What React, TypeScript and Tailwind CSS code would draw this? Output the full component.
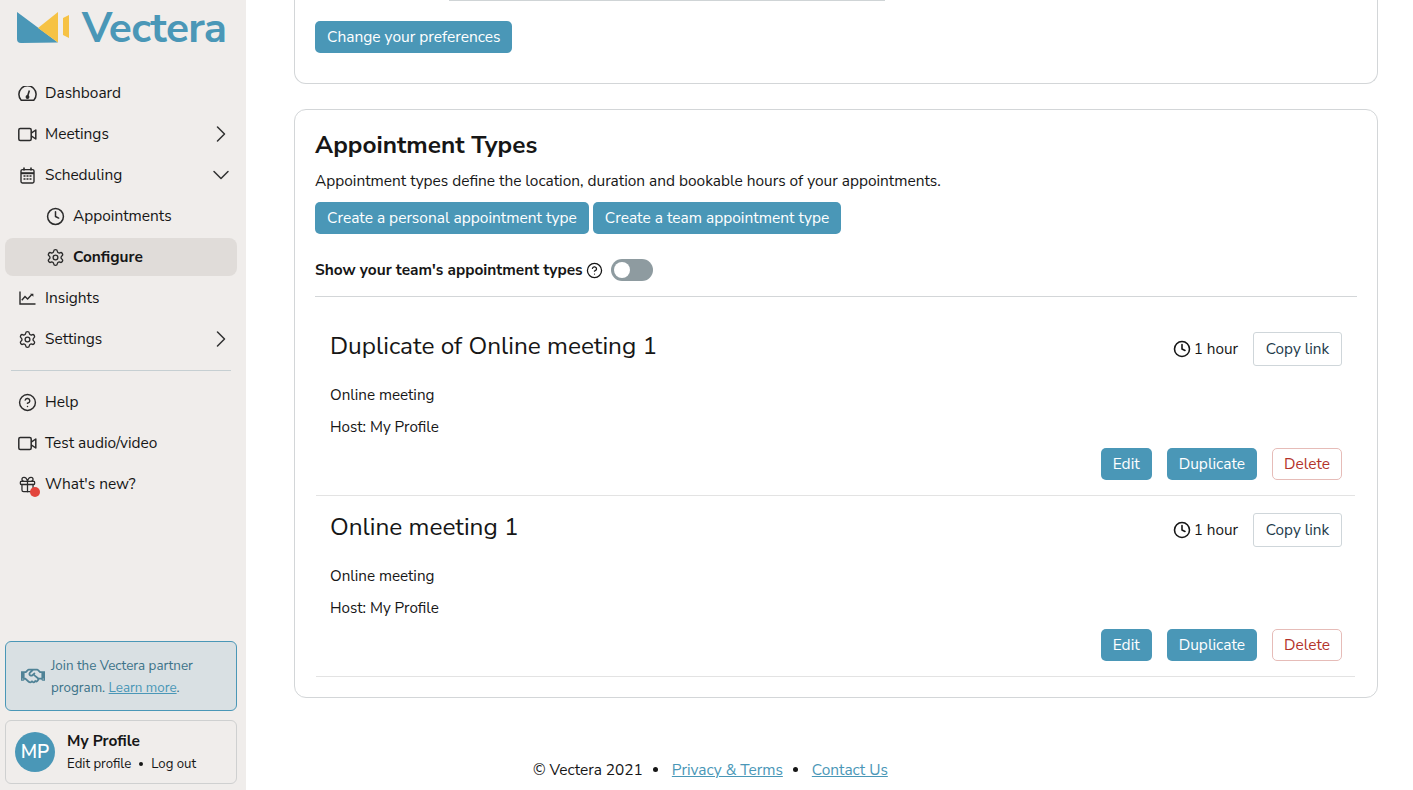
import React from "react";
import { ChevronDown, ChevronRight, CircleHelp, Clock, Gift, Settings } from "lucide-react";
import { FaRegHandshake } from "react-icons/fa";

const VideoIcon = () => (
  <svg width="19" height="15" viewBox="0 0 19 15" fill="none" stroke="#2b2b2b" strokeWidth="1.5">
    <rect x="0.8" y="1.6" width="12.4" height="11.8" rx="1.5" />
    <path d="M13.2 6.2 17.8 3v9l-4.6-3.2" strokeLinejoin="round" />
  </svg>
);

const GaugeIcon = () => (
  <svg width="19" height="15" viewBox="0 0 19 15" fill="none" stroke="#2b2b2b" strokeWidth="1.5">
    <path d="M3.2 14.2h12.6a8.6 8.6 0 1 0-12.6 0Z" strokeLinejoin="round" />
    <path d="M9.5 10.5 11.4 4.5" strokeWidth="1.6" />
    <circle cx="9.5" cy="11" r="1.2" fill="#2b2b2b" />
  </svg>
);

const CalendarIcon = () => (
  <svg width="15" height="17" viewBox="0 0 15 17" fill="none" stroke="#2b2b2b">
    <rect x="1" y="2.6" width="13" height="13.4" rx="1.4" strokeWidth="1.4" />
    <path d="M1 6.2h13" strokeWidth="2" />
    <path d="M4 0.6v3M11 0.6v3" strokeWidth="1.6" />
    <path d="M3.5 9h2M6.5 9h2M9.5 9h2M3.5 12h2M6.5 12h2M9.5 12h2" strokeWidth="1.6" />
  </svg>
);

const ChartIcon = () => (
  <svg width="17" height="14" viewBox="0 0 17 14" fill="none" stroke="#2b2b2b" strokeWidth="1.4">
    <path d="M1 0.5V13h15.5" />
    <path d="M2.8 9.2 6 5.6l2.6 2.4 4.2-4.4" />
    <path d="M11 2.8h3.4v3z" fill="#2b2b2b" stroke="none" />
  </svg>
);

const NavRow = ({
  icon,
  label,
  chevron,
  sub,
  active,
}: {
  icon: React.ReactNode;
  label: string;
  chevron?: "right" | "down";
  sub?: boolean;
  active?: boolean;
}) => (
  <div
    className={`flex h-[38px] items-center rounded-lg pr-[2px] text-[15.45px] text-[#161616] ${sub ? "pl-[40px]" : "pl-[12px]"} ${active ? "bg-[#e0dcd9] font-bold" : ""}`}
  >
    <span className="flex w-[20px] justify-center">{icon}</span>
    <span className="ml-[8px] flex-1">{label}</span>
    {chevron === "right" && <ChevronRight size={28} strokeWidth={1.3} color="#333" />}
    {chevron === "down" && <ChevronDown size={28} strokeWidth={1.3} color="#333" />}
  </div>
);

const Sidebar = () => (
  <aside className="flex h-[790px] w-[246px] shrink-0 flex-col bg-[#f0edeb] pr-[9px] pl-[5px]">
    <div className="flex h-[74px] items-start pt-[12px] pl-[12px]">
      <svg width="53" height="32" viewBox="0 0 53 32" className="shrink-0">
        <path d="M0 0 41 30.5 4 31q-4 0-4-4Z" fill="#4a97b7" />
        <path d="M41 0v30.5L21 16Z" fill="#f6c244" />
        <path d="M46 6l6-3v23l-6-3Z" fill="#f6c244" />
      </svg>
      <span className="mt-[-6px] ml-[12px] text-[42.4px] leading-[44px] font-bold tracking-[-0.7px] text-[#4a97b7]">
        Vectera
      </span>
    </div>
    <nav className="flex flex-col gap-[3px]">
      <NavRow icon={<GaugeIcon />} label="Dashboard" />
      <NavRow icon={<VideoIcon />} label="Meetings" chevron="right" />
      <NavRow icon={<CalendarIcon />} label="Scheduling" chevron="down" />
      <NavRow sub icon={<Clock size={19} strokeWidth={1.9} color="#2b2b2b" />} label="Appointments" />
      <NavRow sub active icon={<Settings size={19} strokeWidth={1.7} color="#2b2b2b" />} label="Configure" />
      <NavRow icon={<ChartIcon />} label="Insights" />
      <NavRow icon={<Settings size={19} strokeWidth={1.7} color="#2b2b2b" />} label="Settings" chevron="right" />
    </nav>
    <div className="mx-[6px] mt-[12px] mb-[12px] h-px bg-[#c6cfd2]" />
    <div className="flex flex-col gap-[3px]">
      <NavRow icon={<CircleHelp size={19} strokeWidth={1.8} color="#2b2b2b" />} label="Help" />
      <NavRow icon={<VideoIcon />} label="Test audio/video" />
      <NavRow
        icon={
          <span className="relative flex">
            <Gift size={19} strokeWidth={1.6} color="#2b2b2b" />
            <span className="absolute top-[12px] left-[12px] h-[10px] w-[10px] rounded-full bg-[#e2453c]" />
          </span>
        }
        label="What's new?"
      />
    </div>
    <div className="mt-auto mb-[6px] flex flex-col gap-[9px]">
      <div className="flex h-[70px] items-center rounded-md border border-[#4a97b7] bg-[#d9e0e3] pl-[15px] text-[13.4px] leading-[22px] text-[#3c7389]">
        <FaRegHandshake size={24} className="shrink-0 text-[#4f8296]" />
        <p className="mt-[2px] ml-[6px]">
          Join the Vectera partner
          <br />
          program. <span className="text-[#4a97b7] underline">Learn more</span>.
        </p>
      </div>
      <div className="flex h-[64px] items-center rounded-md border border-[#cfd0d0] pl-[9px] text-[#161616]">
        <span className="flex h-[40px] w-[40px] items-center justify-center rounded-full bg-[#4a97b7] text-[19px] font-semibold text-white">
          MP
        </span>
        <div className="ml-[12px]">
          <div className="text-[15.45px] leading-[20px] font-bold">My Profile</div>
          <div className="mt-[3px] flex items-center text-[13.2px] leading-[20px]">
            Edit profile<span className="mx-[8px] h-[4px] w-[4px] rounded-full bg-[#161616]" />Log out
          </div>
        </div>
      </div>
    </div>
  </aside>
);

const PrimaryButton = ({ children }: { children: React.ReactNode }) => (
  <button className="h-[32px] rounded-[5px] bg-[#4a97b7] px-[12px] text-[15.5px] text-white">{children}</button>
);

const AppointmentRow = ({ title, tall }: { title: string; tall?: boolean }) => (
  <div className={`mr-[2px] ml-px border-b border-[#e3e3e3] pr-[13px] pb-[15px] pl-[14px] ${tall ? "pt-[35px]" : "pt-[17px]"}`}>
    <div className="flex items-start justify-between">
      <h3 className="text-[24.4px] leading-[28px] text-[#161616]">{title}</h3>
      <div className="flex items-center">
        <Clock size={18} strokeWidth={2.1} color="#161616" />
        <span className="ml-[3px] text-[15.3px] text-[#161616]">1 hour</span>
        <button className="ml-[15px] h-[34px] w-[89px] rounded-[3px] border border-[#cfd6da] text-[15.3px] text-[#1c3a4a]">
          Copy link
        </button>
      </div>
    </div>
    <p className="mt-[18px] text-[15.2px] leading-[22px] text-[#161616]">Online meeting</p>
    <p className="mt-[10px] text-[15.2px] leading-[22px] text-[#161616]">Host: My Profile</p>
    <div className="mt-[10px] flex justify-end gap-[15px]">
      <PrimaryButton>Edit</PrimaryButton>
      <PrimaryButton>Duplicate</PrimaryButton>
      <button className="h-[32px] w-[70px] rounded-[5px] border border-[#e6bcb8] text-[15.45px] text-[#b3322a]">
        Delete
      </button>
    </div>
  </div>
);

export default function App() {
  return (
    <div className="flex h-[790px] w-[1413px] overflow-hidden bg-white font-['Nunito_Sans','Lato','Noto_Sans',sans-serif]">
      <Sidebar />
      <main className="flex flex-1 flex-col overflow-hidden pr-[35px] pl-[48px]">
        <section className="mt-[-20px] h-[104px] shrink-0 rounded-b-xl border-x border-b border-[#d3d6d8] px-[20px] pt-[20px]">
          <div className="ml-[134px] h-px w-[436px] bg-[#cfd4d6]" />
          <div className="mt-[20px]">
            <PrimaryButton>Change your preferences</PrimaryButton>
          </div>
        </section>
        <section className="mt-[25px] h-[589px] shrink-0 rounded-xl border border-[#d3d6d8] px-[20px] pt-[19px]">
          <h2 className="text-[24.4px] leading-[32px] font-bold text-[#161616]">Appointment Types</h2>
          <p className="mt-[9px] text-[15.45px] leading-[22px] text-[#161616]">
            Appointment types define the location, duration and bookable hours of your appointments.
          </p>
          <div className="mt-[10px] flex gap-[4px]">
            <PrimaryButton>Create a personal appointment type</PrimaryButton>
            <PrimaryButton>Create a team appointment type</PrimaryButton>
          </div>
          <div className="mt-[25px] flex items-center border-b border-[#d3d6d8] pb-[15px]">
            <span className="text-[15.45px] leading-[22px] font-bold text-[#161616]">Show your team's appointment types</span>
            <CircleHelp size={17} strokeWidth={1.8} color="#161616" className="ml-[3px]" />
            <span className="ml-[8px] flex h-[22px] w-[42px] items-center rounded-full bg-[#8e9ba0] pl-[3px]">
              <span className="h-[16px] w-[16px] rounded-full bg-white" />
            </span>
          </div>
          <AppointmentRow tall title="Duplicate of Online meeting 1" />
          <AppointmentRow title="Online meeting 1" />
        </section>
        <footer className="mt-[60px] flex items-center pl-[239px] text-[15.45px] text-[#161616]">
          © Vectera 2021
          <span className="mr-[14px] ml-[10px] h-[5px] w-[5px] rounded-full bg-[#161616]" />
          <span className="text-[#4a97b7] underline">Privacy &amp; Terms</span>
          <span className="mr-[14px] ml-[10px] h-[5px] w-[5px] rounded-full bg-[#161616]" />
          <span className="text-[#4a97b7] underline">Contact Us</span>
        </footer>
      </main>
    </div>
  );
}
